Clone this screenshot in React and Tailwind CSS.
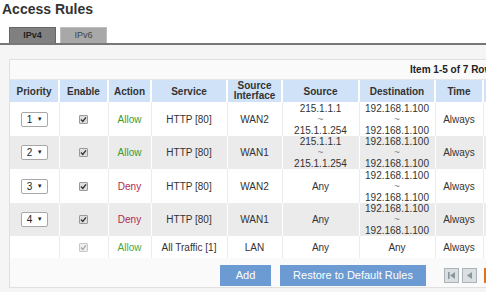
import React from "react";

const cols = [49, 49, 43, 76, 55, 77, 76, 48, 80];

const rules = [
  { p: "1", action: "Allow", service: "HTTP [80]", iface: "WAN2", src: ["215.1.1.1", "215.1.1.254"], dst: ["192.168.1.100", "192.168.1.100"], h: "h-[34px]" },
  { p: "2", action: "Allow", service: "HTTP [80]", iface: "WAN1", src: ["215.1.1.1", "215.1.1.254"], dst: ["192.168.1.100", "192.168.1.100"], h: "h-[33px]" },
  { p: "3", action: "Deny", service: "HTTP [80]", iface: "WAN2", src: null, dst: ["192.168.1.100", "192.168.1.100"], h: "h-[34px]" },
  { p: "4", action: "Deny", service: "HTTP [80]", iface: "WAN1", src: null, dst: ["192.168.1.100", "192.168.1.100"], h: "h-[33px]" },
];

function Range({ v }) {
  if (!v) return "Any";
  return (
    <div className="flex flex-col items-center leading-[11px]">
      <span>{v[0]}</span>
      <span className="text-[#888]">~</span>
      <span>{v[1]}</span>
    </div>
  );
}

function Check({ disabled }) {
  return (
    <span
      className={
        "inline-flex w-[9px] h-[9px] items-center justify-center rounded-[1px] border " +
        (disabled ? "border-[#c8c8c8] bg-[#eeeeee] text-[#aaaaaa]" : "border-[#9a9a9a] bg-[#dedede] text-[#333333]")
      }
    >
      <svg width="7" height="7" viewBox="0 0 7 7">
        <path d="M1 3.6 L2.8 5.4 L6 1.4" fill="none" stroke="currentColor" strokeWidth="1.4" />
      </svg>
    </span>
  );
}

function Select({ value }) {
  return (
    <span className="inline-flex w-[27px] h-[15px] items-center justify-between rounded-[2px] border border-[#a8a8a8] bg-white pl-[5px] pr-[4px] text-[10px] text-[#222]">
      <span>{value}</span>
      <span className="text-[6px]">▼</span>
    </span>
  );
}

function PageBtn({ first }) {
  return (
    <span className="inline-flex w-[15px] h-[15px] items-center justify-center border border-[#a9b3b8] bg-[#d9dfe2]">
      <svg width="9" height="9" viewBox="0 0 9 9">
        {first && <rect x="1" y="1" width="1.6" height="7" fill="#8a979d" />}
        <path d={first ? "M8 1 L8 8 L3 4.5 Z" : "M7 1 L7 8 L2 4.5 Z"} fill="#8a979d" />
      </svg>
    </span>
  );
}

export default function App() {
  return (
    <div className="w-[486px] h-[292px] overflow-hidden bg-white text-[#333] font-['Liberation_Sans',Arial,sans-serif]">
      <h1 className="pl-[2px] pt-[1px] text-[14px] leading-[16px] font-bold text-[#333]">Access Rules</h1>

      <div className="mt-[10px] flex gap-[4px] pl-[9px] border-b-2 border-[#777]">
        <div className="w-[47px] h-[16px] flex items-center justify-center border border-b-0 border-[#666] bg-[#808080] text-[9px] font-bold text-[#222]">
          IPv4
        </div>
        <div className="w-[47px] h-[16px] flex items-center justify-center border border-b-0 border-[#bdbdbd] bg-[#a8a8a8] text-[9px] text-[#444]">
          IPv6
        </div>
      </div>

      <div className="bg-[#f5f5f5] pt-[14px] pl-[9px] h-[250px]">
        <div className="w-[620px] border border-[#e0e0e0] bg-[#fafafa] pb-[1px]">
          <div className="h-[20px] flex items-center pl-[400px] border-b border-[#e6e6e6] text-[10px] font-bold text-[#222] whitespace-nowrap">
            Item 1-5 of 7 Rows
          </div>

          <table className="table-fixed border-collapse text-[10px] leading-[11px] text-center">
            <colgroup>
              {cols.map((w, i) => (
                <col key={i} style={{ width: w }} />
              ))}
            </colgroup>
            <thead>
              <tr className="h-[22px] bg-[#cfe2f7] font-bold text-[#333]">
                <th className="border-r-2 border-white">Priority</th>
                <th className="border-r-2 border-white">Enable</th>
                <th className="border-r-2 border-white">Action</th>
                <th className="border-r-2 border-white">Service</th>
                <th className="border-r-2 border-white leading-[10px]">Source<br />Interface</th>
                <th className="border-r-2 border-white">Source</th>
                <th className="border-r-2 border-white">Destination</th>
                <th className="border-r-2 border-white">Time</th>
                <th></th>
              </tr>
            </thead>
            <tbody>
              {rules.map((r, i) => {
                const gray = i % 2 === 1;
                const cell = "border-r " + (gray ? "border-white" : "border-[#ececec]");
                return (
                  <tr key={r.p} className={r.h + " " + (gray ? "bg-[#ebebeb]" : "bg-white")}>
                    <td className={cell}><Select value={r.p} /></td>
                    <td className={cell}><Check /></td>
                    <td className={cell + (r.action === "Allow" ? " text-[#3d9a2c]" : " text-[#b3264f]")}>{r.action}</td>
                    <td className={cell}>{r.service}</td>
                    <td className={cell}>{r.iface}</td>
                    <td className={cell}><Range v={r.src} /></td>
                    <td className={cell}><Range v={r.dst} /></td>
                    <td className={cell}>Always</td>
                    <td></td>
                  </tr>
                );
              })}
              <tr className="h-[22px] bg-white">
                <td className="border-r border-[#ececec]"></td>
                <td className="border-r border-[#ececec]"><Check disabled /></td>
                <td className="border-r border-[#ececec] text-[#4aa83a]">Allow</td>
                <td className="border-r border-[#ececec]">All Traffic [1]</td>
                <td className="border-r border-[#ececec]">LAN</td>
                <td className="border-r border-[#ececec]">Any</td>
                <td className="border-r border-[#ececec]">Any</td>
                <td className="border-r border-[#ececec]">Always</td>
                <td></td>
              </tr>
            </tbody>
          </table>

          <div className="mt-[7px] flex items-center pl-[210px] h-[21px]">
            <button className="w-[51px] h-[21px] bg-[#6b9bd2] text-white text-[11px]">Add</button>
            <button className="ml-[9px] w-[146px] h-[21px] bg-[#6b9bd2] text-white text-[11px]">Restore to Default Rules</button>
            <div className="ml-[18px] flex gap-[3px]">
              <PageBtn first />
              <PageBtn />
            </div>
            <span className="ml-[7px] w-[3px] h-[15px] bg-[#e0701c]"></span>
          </div>
        </div>
      </div>
    </div>
  );
}
